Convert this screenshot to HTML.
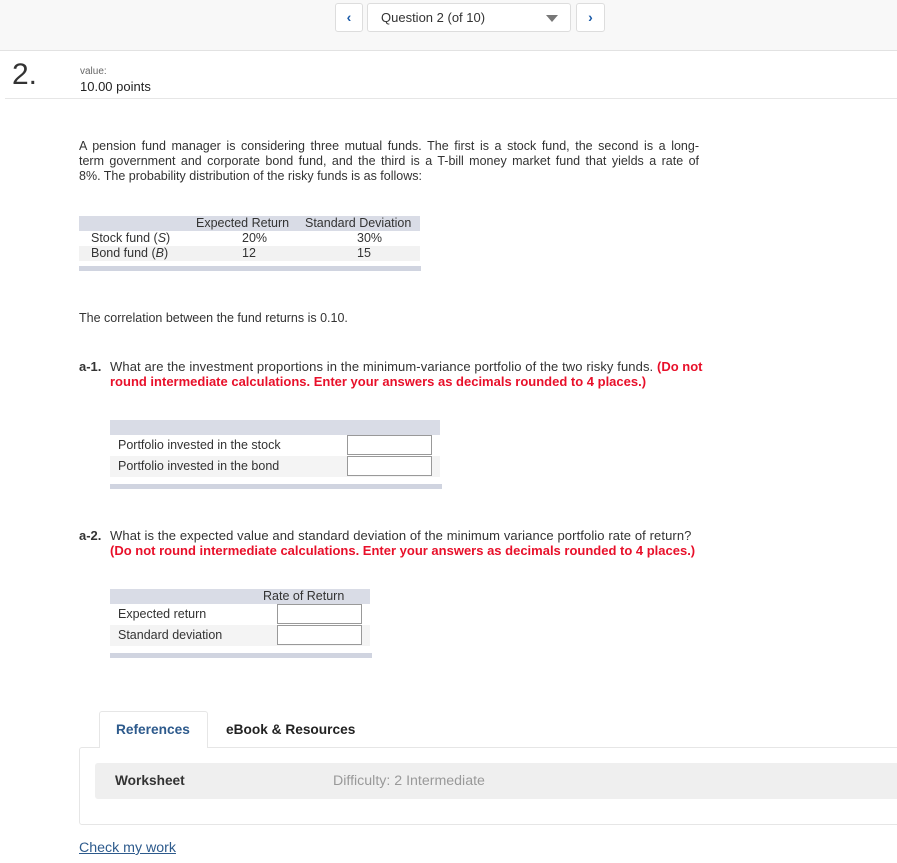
<!DOCTYPE html>
<html><head><meta charset="utf-8"><style>
*{margin:0;padding:0;box-sizing:border-box}
body{width:897px;height:863px;position:relative;background:#fff;font-family:"Liberation Sans",Arial,sans-serif;color:#333;overflow:hidden}
.a{position:absolute}
.t{font-size:12.5px;line-height:15px;white-space:nowrap}
.q{font-size:13px;line-height:15px;white-space:nowrap;letter-spacing:0.1px}
.red{color:#e8102a;font-weight:bold;letter-spacing:0}
.box{background:#fff;border:1px solid #999;height:20px}
.j{width:620px;text-align:justify;text-align-last:justify;font-size:12.5px;line-height:15px;height:15px;white-space:nowrap}
</style></head><body>
<div class="a" style="left:0;top:0;width:897px;height:51px;background:#f8f8f8;border-bottom:1px solid #e2e2e2"></div>
<div class="a" style="left:335px;top:3px;width:28px;height:29px;background:#fff;border:1px solid #ddd;border-radius:3px;color:#1a5aa8;font-weight:bold;text-align:center;line-height:27px;font-size:14px">&#8249;</div>
<div class="a" style="left:367px;top:3px;width:204px;height:29px;background:#fff;border:1px solid #ddd;border-radius:3px;font-size:13px;line-height:27px;padding-left:13px;color:#333">Question 2 (of 10)<span class="a" style="right:12px;top:11px;width:0;height:0;border-left:6px solid transparent;border-right:6px solid transparent;border-top:7px solid #777"></span></div>
<div class="a" style="left:576px;top:3px;width:29px;height:29px;background:#fff;border:1px solid #ddd;border-radius:3px;color:#1a5aa8;font-weight:bold;text-align:center;line-height:27px;font-size:14px">&#8250;</div>

<div class="a" style="left:12px;top:58px;font-size:30px;color:#333">2.</div>
<div class="a" style="left:80px;top:66px;font-size:10px;color:#666">value:</div>
<div class="a" style="left:80px;top:79px;font-size:13px;color:#222">10.00 points</div>
<div class="a" style="left:5px;top:98px;width:892px;height:1px;background:#e6e6e6"></div>

<div class="a" style="left:79px;top:139px">
<div class="j">A pension fund manager is considering three mutual funds. The first is a stock fund, the second is a long-</div>
<div class="j">term government and corporate bond fund, and the third is a T-bill money market fund that yields a rate of</div>
<div class="t">8%. The probability distribution of the risky funds is as follows:</div>
</div>

<div class="a" style="left:79px;top:216px;width:341px;height:15px;background:#d9dce6"></div>
<div class="a" style="left:79px;top:246px;width:341px;height:15px;background:#f2f2f2"></div>
<div class="a" style="left:79px;top:266px;width:342px;height:5px;background:#d0d4e0"></div>
<div class="a t" style="left:196px;top:216px">Expected Return</div>
<div class="a t" style="left:305px;top:216px">Standard Deviation</div>
<div class="a t" style="left:91px;top:231px">Stock fund (<i>S</i>)</div>
<div class="a t" style="left:91px;top:246px">Bond fund (<i>B</i>)</div>
<div class="a t" style="left:242px;top:231px">20%</div>
<div class="a t" style="left:242px;top:246px">12</div>
<div class="a t" style="left:357px;top:231px">30%</div>
<div class="a t" style="left:357px;top:246px">15</div>

<div class="a t" style="left:79px;top:311px">The correlation between the fund returns is 0.10.</div>

<div class="a q" style="left:79px;top:359px;letter-spacing:0"><b>a-1.</b></div>
<div class="a q" style="left:110px;top:359px">What are the investment proportions in the minimum-variance portfolio of the two risky funds. <span class="red">(Do not</span><br><span class="red">round intermediate calculations. Enter your answers as decimals rounded to 4 places.)</span></div>

<div class="a" style="left:110px;top:420px;width:330px;height:15px;background:#d9dce6"></div>
<div class="a" style="left:110px;top:456px;width:330px;height:21px;background:#f4f4f4"></div>
<div class="a" style="left:110px;top:484px;width:332px;height:5px;background:#d0d4e0"></div>
<div class="a t" style="left:118px;top:438px">Portfolio invested in the stock</div>
<div class="a t" style="left:118px;top:459px">Portfolio invested in the bond</div>
<div class="a box" style="left:347px;top:435px;width:85px"></div>
<div class="a box" style="left:347px;top:456px;width:85px"></div>

<div class="a q" style="left:79px;top:528px;letter-spacing:0"><b>a-2.</b></div>
<div class="a q" style="left:110px;top:528px">What is the expected value and standard deviation of the minimum variance portfolio rate of return?<br><span class="red">(Do not round intermediate calculations. Enter your answers as decimals rounded to 4 places.)</span></div>

<div class="a" style="left:110px;top:589px;width:260px;height:15px;background:#d9dce6"></div>
<div class="a" style="left:110px;top:625px;width:260px;height:21px;background:#f4f4f4"></div>
<div class="a" style="left:110px;top:653px;width:262px;height:5px;background:#d0d4e0"></div>
<div class="a t" style="left:263px;top:589px">Rate of Return</div>
<div class="a t" style="left:118px;top:607px">Expected return</div>
<div class="a t" style="left:118px;top:628px">Standard deviation</div>
<div class="a box" style="left:277px;top:604px;width:85px"></div>
<div class="a box" style="left:277px;top:625px;width:85px"></div>

<div class="a" style="left:79px;top:747px;width:830px;height:78px;border:1px solid #e6e6e6;border-radius:3px"></div>
<div class="a" style="left:99px;top:711px;width:109px;height:37px;background:#fff;border:1px solid #e6e6e6;border-bottom:none;border-radius:3px 3px 0 0"></div>
<div class="a" style="left:116px;top:722px;font-size:13.7px;font-weight:bold;color:#2d5a8c">References</div>
<div class="a" style="left:226px;top:722px;font-size:13.7px;font-weight:bold;color:#222">eBook &amp; Resources</div>
<div class="a" style="left:95px;top:763px;width:810px;height:36px;background:#efefef;border-radius:3px"></div>
<div class="a" style="left:115px;top:773px;font-size:13.7px;font-weight:bold;color:#333">Worksheet</div>
<div class="a" style="left:333px;top:773px;font-size:14.2px;color:#999">Difficulty: 2 Intermediate</div>
<div class="a" style="left:79px;top:840px;font-size:14.2px;color:#2d5a8c;text-decoration:underline">Check my work</div>
</body></html>
